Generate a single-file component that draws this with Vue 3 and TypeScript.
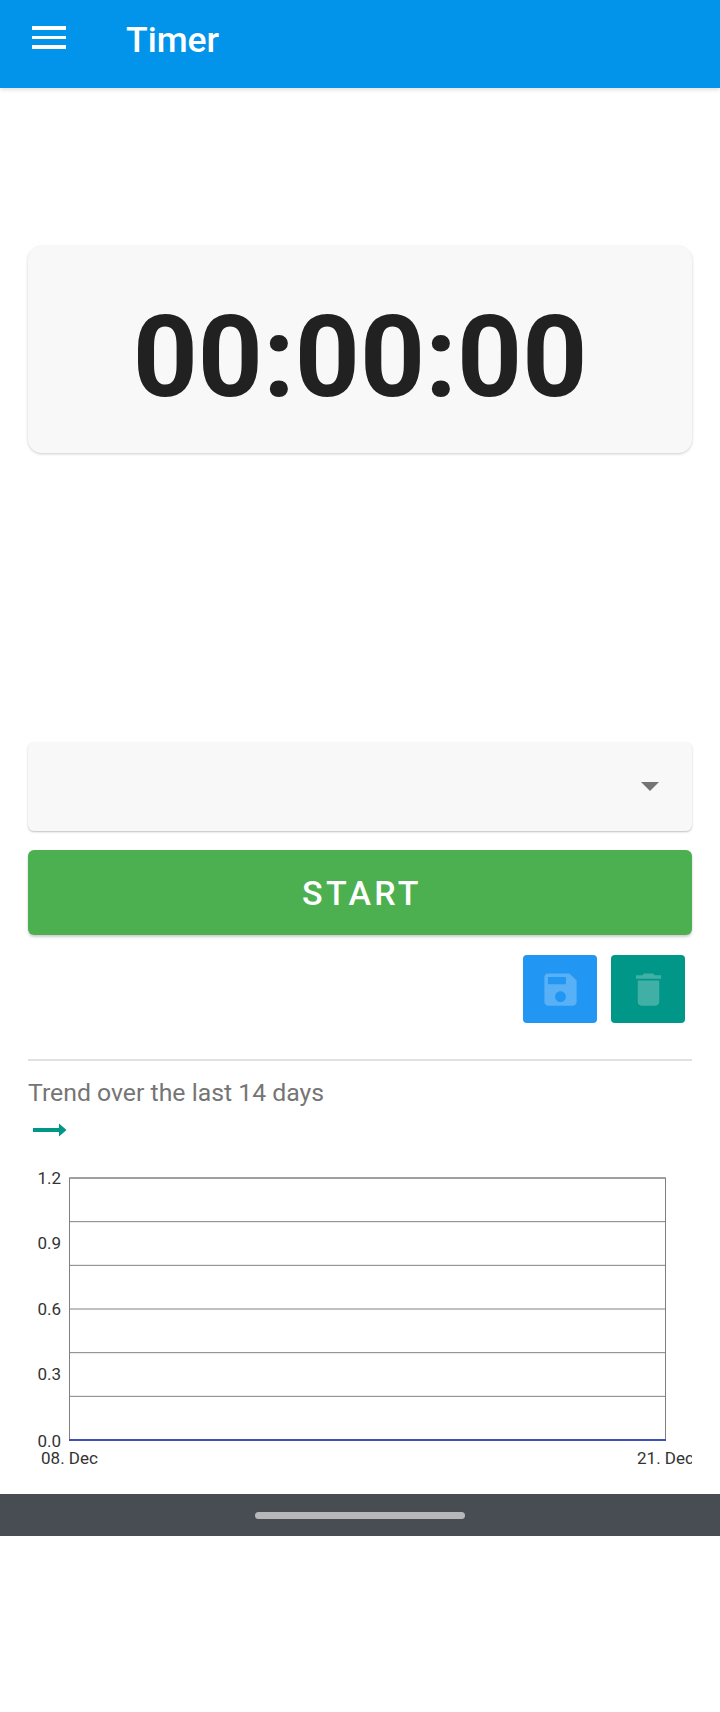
<script setup lang="ts">
const gridLines: number[] = [0, 1, 2, 3, 4, 5].map((i) => 1 + i * 43.67);
const yLabels = [
  { text: "1.2", y: 7 },
  { text: "0.9", y: 72 },
  { text: "0.6", y: 138 },
  { text: "0.3", y: 203 },
  { text: "0.0", y: 270 },
];
</script>

<template>
  <main class="page">
    <header class="toolbar">
      <button class="menu" aria-label="Menu">
        <span></span>
        <span></span>
        <span></span>
      </button>
      <h1 class="title">Timer</h1>
    </header>

    <section class="content">
      <div class="clock">00:00:00</div>

      <div class="select">
        <span class="caret"></span>
      </div>

      <button class="start">START</button>

      <div class="actions">
        <button class="action save" aria-label="Save">
          <svg viewBox="0 0 24 24" width="43" height="43">
            <path d="M17 3H5c-1.11 0-2 .9-2 2v14c0 1.1.89 2 2 2h14c1.1 0 2-.9 2-2V7l-4-4zm-5 16c-1.66 0-3-1.34-3-3s1.34-3 3-3 3 1.34 3 3-1.34 3-3 3zm3-10H5V5h10v4z" />
          </svg>
        </button>
        <button class="action trash" aria-label="Delete">
          <svg viewBox="0 0 24 24" width="43" height="43">
            <path d="M6 19c0 1.1.9 2 2 2h8c1.1 0 2-.9 2-2V7H6v12zM19 4h-3.500l-1-1h-5l-1 1H5v2h14V4z" />
          </svg>
        </button>
      </div>

      <hr class="divider" />

      <p class="trend">Trend over the last 14 days</p>
      <svg class="arrow" viewBox="0 0 34 14" width="34" height="14">
        <path d="M0 5h26V0.500L33.500 7 26 13.500V9H0z" />
      </svg>

      <svg class="chart" viewBox="0 -10 664 312" width="664" height="312">
        <rect x="41.500" y="1" width="596" height="262" fill="none" stroke="#808080" stroke-width="1" />
        <line
          v-for="y in gridLines"
          :key="y"
          x1="41.500"
          x2="637.500"
          :y1="y"
          :y2="y"
          stroke="#808080"
          stroke-width="1"
        />
        <line x1="41" x2="638" y1="263" y2="263" stroke="#3f51b5" stroke-width="2" />
        <text
          v-for="l in yLabels"
          :key="l.text"
          x="33"
          :y="l.y"
          text-anchor="end"
          class="tick"
        >{{ l.text }}</text>
        <text x="41.500" y="287" text-anchor="middle" class="tick">08. Dec</text>
        <text x="637.500" y="287" text-anchor="middle" class="tick">21. Dec</text>
      </svg>
    </section>

    <footer class="navbar">
      <span class="pill"></span>
    </footer>
  </main>
</template>

<style>
html,
body {
  margin: 0;
  background: #fff;
}
</style>

<style scoped>
.page {
  height: 1712px;
  display: flex;
  flex-direction: column;
  background: #fff;
  font-family: Roboto, "Liberation Sans", sans-serif;
  overflow: hidden;
}

.toolbar {
  flex: none;
  height: 88px;
  display: flex;
  align-items: center;
  background: #0293ea;
  box-shadow: 0 2px 4px rgba(0, 0, 0, 0.12);
  position: relative;
}

.menu {
  width: 34px;
  margin: -13px 0 0 32px;
  padding: 0;
  border: 0;
  background: none;
  display: flex;
  flex-direction: column;
  gap: 6px;
}

.menu span {
  height: 3.500px;
  background: #fff;
}

.title {
  margin: -8px 0 0 60px;
  color: #fff;
  font-size: 35.500px;
  font-weight: 500;
}

.content {
  flex: none;
  height: 1406px;
  box-sizing: border-box;
  padding: 158px 28px 0;
}

.clock {
  height: 207px;
  box-sizing: border-box;
  padding-top: 15px;
  display: flex;
  align-items: center;
  justify-content: center;
  background: #f8f8f8;
  border-radius: 14px;
  box-shadow: 0 1px 3px rgba(0, 0, 0, 0.2);
  color: #212121;
  font-size: 113.500px;
  font-weight: 700;
}

.select {
  height: 89px;
  margin-top: 289px;
  display: flex;
  align-items: center;
  justify-content: flex-end;
  padding-right: 33px;
  background: #f8f8f8;
  border-radius: 6px;
  box-shadow: 0 1px 2px rgba(0, 0, 0, 0.25);
}

.caret {
  border-left: 9px solid transparent;
  border-right: 9px solid transparent;
  border-top: 9px solid #757575;
}

.start {
  display: block;
  width: 100%;
  height: 85px;
  margin-top: 19px;
  padding: 0 0 0 4px;
  border: 0;
  border-radius: 6px;
  background: #4caf50;
  color: #fff;
  font-family: inherit;
  font-size: 34px;
  font-weight: 500;
  letter-spacing: 3.300px;
  box-shadow: 0 2px 3px rgba(0, 0, 0, 0.2);
}

.actions {
  display: flex;
  justify-content: flex-end;
  gap: 14px;
  margin-top: 20px;
  padding-right: 7px;
}

.action {
  width: 74px;
  height: 68px;
  padding: 0;
  border: 0;
  border-radius: 4px;
  display: flex;
  align-items: center;
  justify-content: center;
}

.action svg {
  fill: rgba(255, 255, 255, 0.25);
}

.save {
  background: #2196f3;
}

.trash {
  background: #009688;
}

.divider {
  height: 2px;
  margin: 36px 0 0;
  border: 0;
  background: #e0e0e0;
}

.trend {
  margin: 18px 0 0;
  color: #757575;
  font-size: 24.800px;
  line-height: 28px;
}

.arrow {
  display: block;
  margin: 16px 0 0 5px;
  fill: #009688;
}

.chart {
  display: block;
  margin-top: 30px;
}

.tick {
  fill: #333;
  font-family: Roboto, "Liberation Sans", sans-serif;
  font-size: 17px;
}

.navbar {
  flex: none;
  height: 42px;
  display: flex;
  align-items: center;
  justify-content: center;
  background: #474d52;
}

.pill {
  width: 210px;
  height: 7px;
  border-radius: 4px;
  background: #b5b7b9;
}
</style>
